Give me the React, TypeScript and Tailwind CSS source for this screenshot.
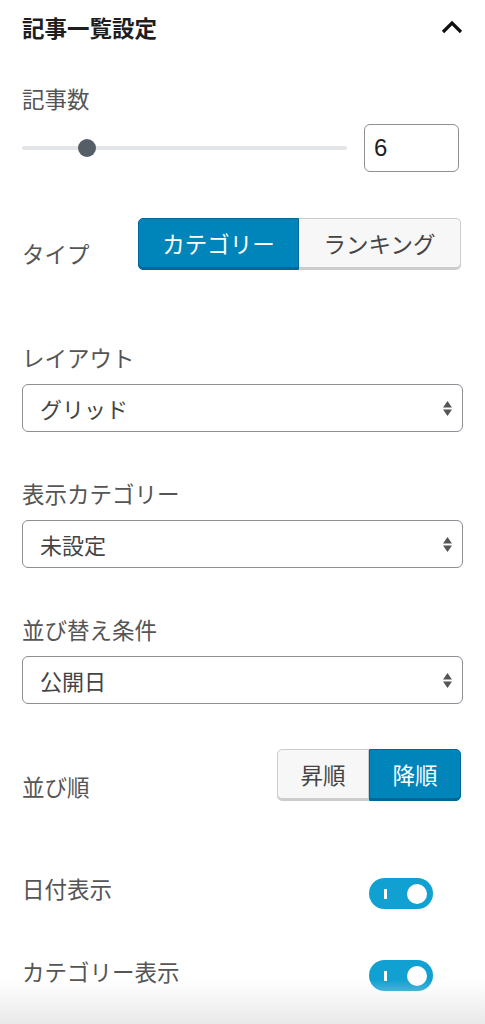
import React from "react";

const font = { fontFamily: '"Noto Sans CJK JP", "Noto Sans", sans-serif' };

function SelectBox({ value }: { value: string }) {
  return (
    <div className="flex h-[48px] w-full items-center justify-between rounded-[6px] border border-[#8c8f94] bg-white pl-[17px] pr-[9px]">
      <span className="text-[22px] leading-[30px] text-[#444]">{value}</span>
      <svg width="11" height="17" viewBox="0 0 11 17" className="mt-[1px]">
        <path d="M5.5 1 L10 7.5 L1 7.5 Z" fill="#555" />
        <path d="M5.5 16 L10 9.5 L1 9.5 Z" fill="#555" />
      </svg>
    </div>
  );
}

function Toggle() {
  return (
    <div className="flex h-[31px] w-[64px] items-center rounded-full bg-[#11a0d2] px-[6px]">
      <div className="ml-[9px] h-[10px] w-[3px] bg-white" />
      <div className="ml-auto h-[20px] w-[20px] rounded-full bg-white" />
    </div>
  );
}

export default function App() {
  return (
    <div className="relative h-[1024px] w-full overflow-hidden bg-white" style={font}>
      <div className="flex flex-col px-[22px]">
        {/* Title */}
        <div className="flex h-[54px] items-center justify-between">
          <span className="text-[22.5px] font-bold leading-[30px] text-[#1e1e1e]">記事一覧設定</span>
          <svg width="24" height="16" viewBox="0 0 24 16" className="mr-[-1px]">
            <path d="M3 13 L12 4 L21 13" fill="none" stroke="#111" strokeWidth="3.2" />
          </svg>
        </div>

        {/* 記事数 */}
        <div className="mt-[29px] text-[22.5px] leading-[30px] text-[#555]">記事数</div>
        <div className="mt-[11px] flex h-[48px] items-center">
          <div className="relative h-[4px] flex-1 rounded-full bg-[#e2e4e7]">
            <div className="absolute left-[56px] top-[-7px] h-[18px] w-[18px] rounded-full bg-[#555d66]" />
          </div>
          <div className="ml-[17px] mr-[4px] flex h-[48px] w-[95px] items-center rounded-[6px] border border-[#8c8f94] pl-[9px]">
            <span className="text-[24px] leading-[30px] text-[#1e1e1e]" style={{ fontFamily: '"Liberation Sans", Arial, sans-serif' }}>6</span>
          </div>
        </div>

        {/* タイプ */}
        <div className="mt-[46px] flex items-end justify-between">
          <span className="pb-[2px] text-[22.5px] leading-[30px] text-[#555]">タイプ</span>
          <div className="mr-[2px] flex h-[52px]">
            <div className="flex w-[161px] items-center justify-center rounded-l-[5px] border border-[#006799] bg-[#0085ba] text-[22.5px] text-white shadow-[inset_0_-2px_0_#006799]">
              カテゴリー
            </div>
            <div className="flex w-[162px] items-center justify-center rounded-r-[5px] border border-l-0 border-[#cccccc] bg-[#f7f7f7] text-[22.5px] text-[#444] shadow-[inset_0_-2px_0_#cccccc]">
              ランキング
            </div>
          </div>
        </div>

        {/* レイアウト */}
        <div className="mt-[72px] text-[22.5px] leading-[30px] text-[#555]">レイアウト</div>
        <div className="mt-[12px]">
          <SelectBox value="グリッド" />
        </div>

        {/* 表示カテゴリー */}
        <div className="mt-[46px] text-[22.5px] leading-[30px] text-[#555]">表示カテゴリー</div>
        <div className="mt-[12px]">
          <SelectBox value="未設定" />
        </div>

        {/* 並び替え条件 */}
        <div className="mt-[46px] text-[22.5px] leading-[30px] text-[#555]">並び替え条件</div>
        <div className="mt-[12px]">
          <SelectBox value="公開日" />
        </div>

        {/* 並び順 */}
        <div className="mt-[45px] flex items-end justify-between">
          <span className="text-[22.5px] leading-[30px] text-[#555]">並び順</span>
          <div className="mr-[2px] flex h-[52px]">
            <div className="flex w-[92px] items-center justify-center rounded-l-[5px] border border-[#cccccc] bg-[#f7f7f7] text-[22.5px] text-[#444] shadow-[inset_0_-2px_0_#cccccc]">
              昇順
            </div>
            <div className="flex w-[92px] items-center justify-center rounded-r-[5px] border border-[#006799] bg-[#0085ba] text-[22.5px] text-white shadow-[inset_0_-2px_0_#006799]">
              降順
            </div>
          </div>
        </div>

        {/* 日付表示 */}
        <div className="mt-[72px] flex items-start justify-between">
          <span className="text-[22.5px] leading-[30px] text-[#555]">日付表示</span>
          <div className="mr-[30px] mt-[5px]">
            <Toggle />
          </div>
        </div>

        {/* カテゴリー表示 */}
        <div className="mt-[47px] flex items-start justify-between">
          <span className="text-[22.5px] leading-[30px] text-[#555]">カテゴリー表示</span>
          <div className="mr-[30px] mt-[4px]">
            <Toggle />
          </div>
        </div>
      </div>

      <div className="pointer-events-none absolute bottom-0 left-0 h-[44px] w-full bg-gradient-to-b from-[rgba(236,236,236,0)] to-[#e9e9e9]" />
    </div>
  );
}
